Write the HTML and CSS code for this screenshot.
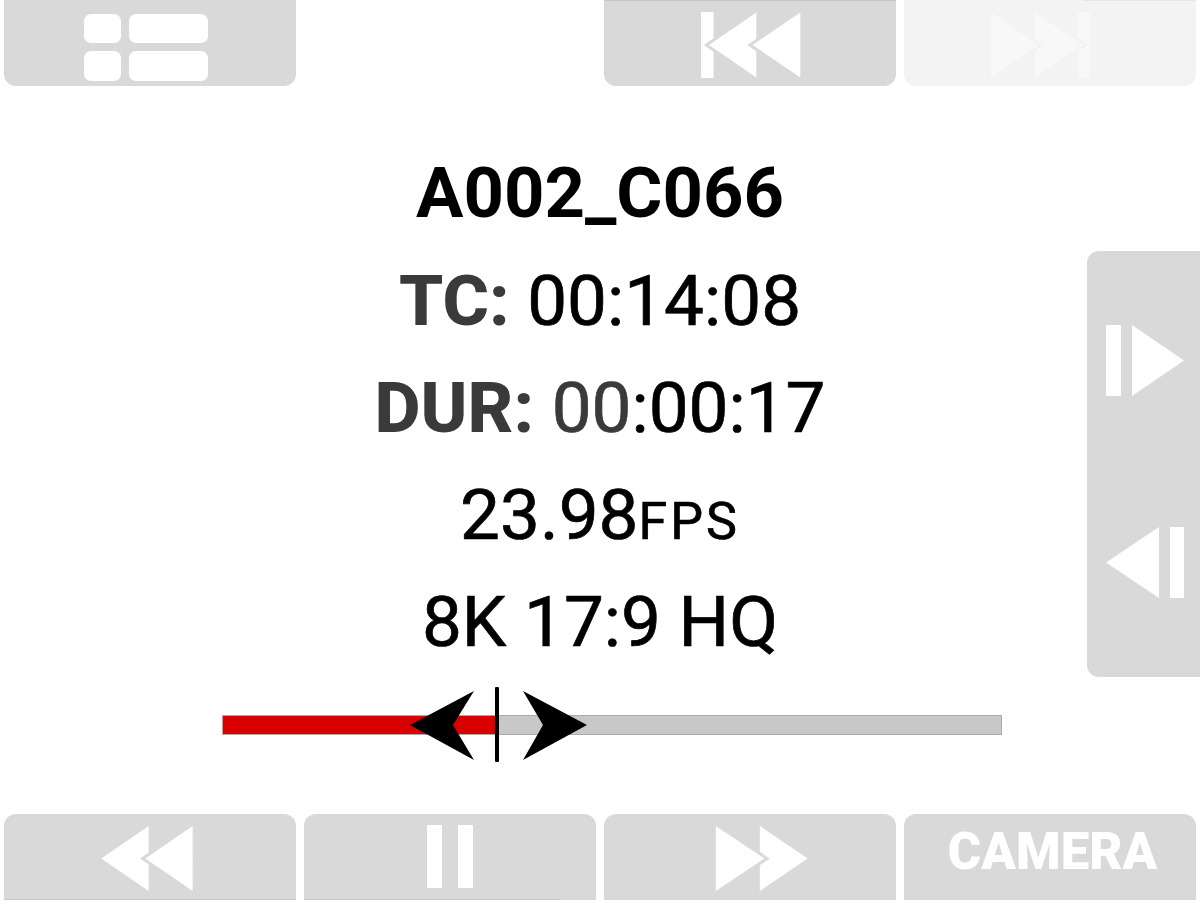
FILE: index.html
```html
<!DOCTYPE html>
<html>

<head>
    <title>Playback</title>
    <link rel="stylesheet" href="styles.css">
</head>

<body>
    <div class="screen">
        <div class="button-row">
            <button class="btn">
                <svg class="icon" viewBox="0 0 292 86">
                    <rect x="80" y="14" width="37" height="29" rx="7" />
                    <rect x="125" y="14" width="79" height="29" rx="7" />
                    <rect x="80" y="51" width="37" height="30" rx="7" />
                    <rect x="125" y="51" width="79" height="30" rx="7" />
                </svg>
            </button>
            <div class="btn-spacer"></div>
            <button class="btn btn-top-line">
                <svg class="icon" viewBox="0 0 292 86">
                    <rect x="97" y="12" width="12.5" height="66" />
                    <polygon class="halo" points="105,45 152.300,12.500 152.300,77.500" />
                    <polygon class="halo" points="148.500,45 196.300,12.500 196.300,77.500" />
                </svg>
            </button>
            <button class="btn btn-disabled">
                <svg class="icon" viewBox="0 0 292 86">
                    <rect x="174" y="12" width="12" height="66" />
                    <polygon class="halo" points="131,12.500 179,45 131,77.500" />
                    <polygon class="halo" points="87,12.500 135,45 87,77.500" />
                </svg>
            </button>
        </div>

        <div class="main">
            <div class="info">
                <div class="info-line clip-name">A002_C066</div>
                <div class="info-line"><span class="label">TC:</span> 00:14:08</div>
                <div class="info-line"><span class="label">DUR:</span> <span class="dim">00</span>:00:17</div>
                <div class="info-line">23.98<span class="unit">FPS</span></div>
                <div class="info-line">8K 17:9 HQ</div>
            </div>

            <div class="side-panel">
                <svg class="side-icon" viewBox="0 0 113 426">
                    <rect x="19" y="74" width="15" height="71" />
                    <polygon points="45,74 97,109.500 45,145" />
                    <polygon points="19,311.500 72,276 72,347" />
                    <rect x="83" y="276" width="14" height="71" />
                </svg>
            </div>

            <div class="scrub">
                <div class="scrub-fill" style="width: 35.3%"></div>
                <div class="scrub-marker"></div>
                <svg class="scrub-arrows" viewBox="0 0 180 76">
                    <polygon points="3,38 67,4 46,38 67,73" />
                    <polygon points="116,4 180,38 116,73 136,38" />
                </svg>
            </div>
        </div>

        <div class="button-row">
            <button class="btn btn-bottom btn-line">
                <svg class="icon" viewBox="0 0 292 86">
                    <polygon class="halo" points="97.300,44.500 144.700,12 144.700,77" />
                    <polygon class="halo" points="141.300,44.500 188.700,12 188.700,77" />
                </svg>
            </button>
            <button class="btn btn-bottom btn-line btn-line-short">
                <svg class="icon" viewBox="0 0 292 86">
                    <rect x="123" y="11" width="15" height="63" />
                    <rect x="154" y="11" width="15" height="63" />
                </svg>
            </button>
            <button class="btn btn-bottom">
                <svg class="icon" viewBox="0 0 292 86">
                    <polygon class="halo" points="155.800,12 203.600,44.500 155.800,77" />
                    <polygon class="halo" points="111.800,12 160.400,44.500 111.800,77" />
                </svg>
            </button>
            <button class="btn btn-bottom btn-text">CAMERA</button>
        </div>
    </div>
</body>

</html>
```

FILE: styles.css
```css
body {
    margin: 0;
    background-color: #fff;
    font-family: Roboto, sans-serif;
}

.screen {
    width: 1200px;
    height: 900px;
    overflow: hidden;
    display: flex;
    flex-direction: column;
}

.button-row {
    display: grid;
    grid-template-columns: repeat(4, 292px);
    gap: 8px;
    height: 86px;
    padding: 0 4px;
}

.btn {
    --halo: #d9d9d9;
    display: block;
    padding: 0;
    border: none;
    border-radius: 0 0 12px 12px;
    background-color: #d9d9d9;
    background-repeat: no-repeat;
    font-family: inherit;
}

.btn-top-line {
    background-image: linear-gradient(#c4c4c4, #c4c4c4);
    background-size: 100% 1px;
    background-position: top left;
}

.btn-disabled {
    --halo: #f3f3f3;
    background-color: #f3f3f3;
    background-image: linear-gradient(#e6e6e6, #e6e6e6);
    background-size: 113px 1px;
    background-position: top right;
}

.btn-disabled .icon {
    fill: #f8f8f8;
}

.btn-bottom {
    border-radius: 12px 12px 0 0;
}

.btn-line {
    background-image: linear-gradient(#c6c6c6, #c6c6c6);
    background-size: 100% 1px;
    background-position: bottom left;
}

.btn-line-short {
    background-size: 257px 1px;
}

.btn-text {
    padding: 0 0 11px 5px;
    color: #fff;
    font-size: 51px;
    font-weight: 900;
}

.icon {
    display: block;
    width: 292px;
    height: 86px;
    fill: #fff;
}

.halo {
    stroke: var(--halo);
    stroke-width: 6;
    stroke-miterlimit: 10;
    paint-order: stroke;
}

.main {
    flex: 1;
    display: grid;
    grid-template-columns: 113px 1fr 113px;
    grid-template-rows: auto 1fr;
}

.info {
    grid-column: 2;
    padding-top: 54px;
    text-align: center;
    font-size: 71px;
    line-height: 107px;
    color: #000;
    -webkit-text-stroke: 0.7px;
}

.clip-name {
    font-size: 70.6px;
    font-weight: 700;
    -webkit-text-stroke: 0;
}

.label {
    font-weight: 800;
    color: #3a3a3a;
    -webkit-text-stroke: 0;
}

.dim {
    color: #3a3a3a;
}

.unit {
    font-size: 52px;
    letter-spacing: 3px;
    line-height: 1;
}

.side-panel {
    grid-column: 3;
    margin-top: 165px;
    height: 426px;
    border-radius: 12px 0 0 12px;
    background-color: #d9d9d9;
}

.side-icon {
    display: block;
    width: 113px;
    height: 426px;
    fill: #fff;
}

.scrub {
    grid-column: 1 / 4;
    position: relative;
    box-sizing: border-box;
    width: 780px;
    height: 20px;
    margin: 38px 0 0 222px;
    border: 1px solid #aaa;
    background-color: #c8c8c8;
}

.scrub-fill {
    height: 100%;
    background-color: #d90000;
}

.scrub-marker {
    position: absolute;
    left: 272px;
    top: -29px;
    width: 4px;
    height: 75px;
    border-radius: 1px;
    background-color: #000;
}

.scrub-arrows {
    position: absolute;
    left: 184px;
    top: -29px;
    width: 180px;
    height: 76px;
    fill: #000;
}
```
